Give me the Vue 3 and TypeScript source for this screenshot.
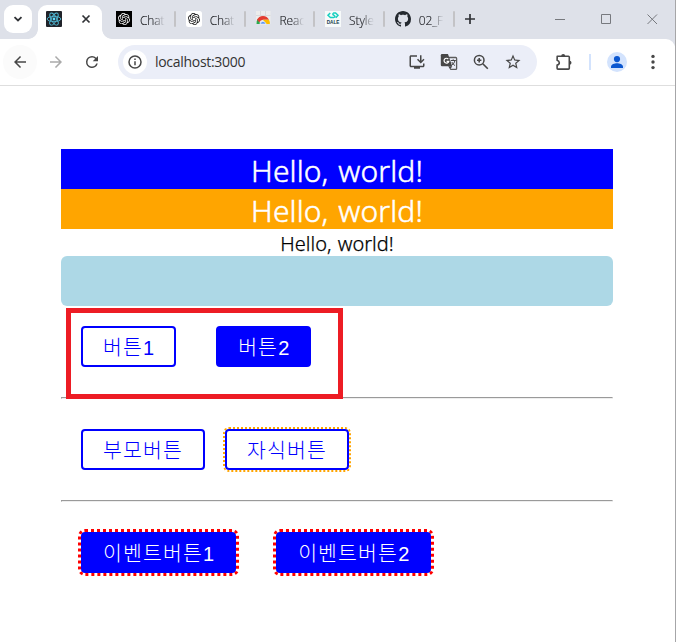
<script setup lang="ts">
interface Tab {
  icon: 'gpt-dark' | 'gpt-light' | 'chrome' | 'dale' | 'github'
  title: string
}

const tabs: Tab[] = [
  { icon: 'gpt-dark', title: 'Chat' },
  { icon: 'gpt-light', title: 'Chat' },
  { icon: 'chrome', title: 'Reac' },
  { icon: 'dale', title: 'Style' },
  { icon: 'github', title: '02_F' },
]

const knot =
  'M22.2819 9.8211a5.9847 5.9847 0 0 0-.5157-4.9108 6.0462 6.0462 0 0 0-6.5098-2.9A6.0651 6.0651 0 0 0 4.9807 4.1818a5.9847 5.9847 0 0 0-3.9977 2.9 6.0462 6.0462 0 0 0 .7427 7.0966 5.98 5.98 0 0 0 .511 4.9107 6.051 6.051 0 0 0 6.5146 2.9001A5.9847 5.9847 0 0 0 13.2599 24a6.0557 6.0557 0 0 0 5.7718-4.2058 5.9894 5.9894 0 0 0 3.9977-2.9001 6.0557 6.0557 0 0 0-.7475-7.0729zm-9.022 12.6081a4.4755 4.4755 0 0 1-2.8764-1.0408l.1419-.0804 4.7783-2.7582a.7948.7948 0 0 0 .3927-.6813v-6.7369l2.02 1.1686a.071.071 0 0 1 .038.052v5.5826a4.504 4.504 0 0 1-4.4945 4.4944zm-9.6607-4.1254a4.4708 4.4708 0 0 1-.5346-3.0137l.142.0852 4.783 2.7582a.7712.7712 0 0 0 .7806 0l5.8428-3.3685v2.3324a.0804.0804 0 0 1-.0332.0615L9.74 19.9502a4.4992 4.4992 0 0 1-6.1408-1.6464zM2.3408 7.8956a4.485 4.485 0 0 1 2.3655-1.9728V11.6a.7664.7664 0 0 0 .3879.6765l5.8144 3.3543-2.0201 1.1685a.0757.0757 0 0 1-.071 0l-4.8303-2.7865A4.504 4.504 0 0 1 2.3408 7.872zm16.5963 3.8558L13.1038 8.364 15.1192 7.2a.0757.0757 0 0 1 .071 0l4.8303 2.7913a4.4944 4.4944 0 0 1-.6765 8.1042v-5.6772a.79.79 0 0 0-.407-.667zm2.0107-3.0231l-.142-.0852-4.7735-2.7818a.7759.7759 0 0 0-.7854 0L9.409 9.2297V6.8974a.0662.0662 0 0 1 .0284-.0615l4.8303-2.7866a4.4992 4.4992 0 0 1 6.6802 4.66zM8.3065 12.863l-2.02-1.1638a.0804.0804 0 0 1-.038-.0567V6.0742a4.4992 4.4992 0 0 1 7.3757-3.4537l-.142.0805L8.704 5.459a.7948.7948 0 0 0-.3927.6813zm1.0976-2.3654l2.602-1.4998 2.6069 1.4998v2.9994l-2.5974 1.4997-2.6067-1.4997Z'
</script>

<template>
  <div class="window">
    <header class="tabstrip">
      <div class="search-tabs">
        <svg width="10" height="10" viewBox="0 0 10 10"><path d="M1.5 3.2L5 6.5l3.5-3.3" class="dark-stroke" stroke-width="1.8" /></svg>
      </div>
      <div class="active-tab">
        <svg width="16" height="16" viewBox="0 0 16 16">
          <rect width="16" height="16" rx="1" fill="#20232a" />
          <g fill="none" stroke="#4fb8d4" stroke-width="0.9">
            <ellipse cx="8" cy="8" rx="6.8" ry="2.7" />
            <ellipse cx="8" cy="8" rx="6.8" ry="2.7" transform="rotate(60 8 8)" />
            <ellipse cx="8" cy="8" rx="6.8" ry="2.7" transform="rotate(120 8 8)" />
          </g>
          <circle cx="8" cy="8" r="1.4" fill="#61dafb" />
        </svg>
        <svg width="10" height="10" viewBox="0 0 10 10"><path d="M1.5 1.5l7 7M8.5 1.5l-7 7" class="dark-stroke" stroke-width="1.7" /></svg>
      </div>
      <div v-for="(tab, i) in tabs" :key="i" class="tab">
        <svg v-if="tab.icon === 'gpt-dark'" width="16" height="16" viewBox="0 0 32 32">
          <rect width="32" height="32" fill="#000" />
          <path :d="knot" fill="#fff" transform="translate(4 4)" />
        </svg>
        <svg v-else-if="tab.icon === 'gpt-light'" width="16" height="16" viewBox="0 0 32 32">
          <rect width="32" height="32" rx="5" fill="#fff" />
          <path :d="knot" fill="#111" transform="translate(4 4)" />
        </svg>
        <svg v-else-if="tab.icon === 'chrome'" width="16" height="16" viewBox="0 0 16 16">
          <path d="M1 0h14.5v13H1z" fill="#ececec" />
          <path d="M1 4.5h14.5M5.5 0v4.5M10.5 0v4.5" stroke="#dadada" />
          <path d="M1.5 13A6.7 6.7 0 0 1 2.6 8l3 5z" fill="#2da94f" />
          <path d="M2 8.8A6.6 6.6 0 0 1 14 8.8H8a4 4 0 0 0-3.6 2.5z" fill="#e33b2e" />
          <path d="M8 8.8h6a7 7 0 0 1 .8 4.2h-4z" fill="#fdbd00" />
          <path d="M4.9 13a3.2 3.2 0 0 1 6.2 0z" fill="#4285f4" stroke="#fff" stroke-width="0.7" />
        </svg>
        <svg v-else-if="tab.icon === 'dale'" width="16" height="16" viewBox="0 0 16 16">
          <rect width="16" height="16" fill="#f7fafa" />
          <path d="M5.2 2L3 4.3l2.4 2.2h3.2q2.4-.8.4-2.1-2.2-1.2-.4-2.4h2L13 4.3 10.8 6.8" fill="none" stroke="#18cfc0" stroke-width="1.5" />
          <text x="1.7" y="13" class="dale" textLength="12.8" lengthAdjust="spacingAndGlyphs">DALE</text>
        </svg>
        <svg v-else width="16" height="16" viewBox="0 0 16 16">
          <path fill="#24292f" d="M8 0C3.58 0 0 3.58 0 8c0 3.54 2.29 6.53 5.47 7.59.4.07.55-.17.55-.38 0-.19-.01-.82-.01-1.49-2.01.37-2.53-.49-2.69-.94-.09-.23-.48-.94-.82-1.13-.28-.15-.68-.52-.01-.53.63-.01 1.08.58 1.23.82.72 1.21 1.87.87 2.33.66.07-.52.28-.87.51-1.07-1.78-.2-3.64-.89-3.64-3.95 0-.87.31-1.59.82-2.15-.08-.2-.36-1.02.08-2.12 0 0 .67-.21 2.2.82.64-.18 1.32-.27 2-.27s1.36.09 2 .27c1.53-1.04 2.2-.82 2.2-.82.44 1.1.16 1.92.08 2.12.51.56.82 1.27.82 2.15 0 3.07-1.87 3.75-3.65 3.95.29.25.54.73.54 1.48 0 1.07-.01 1.93-.01 2.2 0 .21.15.46.55.38A8.01 8.01 0 0 0 16 8c0-4.42-3.58-8-8-8z" />
        </svg>
        <span class="tab-title">{{ tab.title }}</span>
        <i class="tab-divider"></i>
      </div>
      <svg class="plus" width="12" height="12" viewBox="0 0 12 12"><path d="M6 1v10M1 6h10" class="dark-stroke" stroke-width="1.7" /></svg>
      <div class="controls">
        <svg width="11" height="11" viewBox="0 0 11 11"><path d="M0 5.5h10" /></svg>
        <svg width="11" height="11" viewBox="0 0 11 11"><path d="M.5.5h9v9h-9z" /></svg>
        <svg width="11" height="11" viewBox="0 0 11 11"><path d="M.5.5l9.5 9.5M10 .5L.5 10" /></svg>
      </div>
    </header>

    <nav class="toolbar">
      <div class="back">
        <svg width="18" height="18" viewBox="0 0 24 24"><path d="M20 11H7.83l5.59-5.59L12 4l-8 8 8 8 1.41-1.41L7.83 13H20z" fill="#474747" /></svg>
      </div>
      <svg class="forward" width="18" height="18" viewBox="0 0 24 24"><path d="M12 4l-1.41 1.41L16.17 11H4v2h12.17l-5.58 5.59L12 20l8-8z" fill="#aaa" /></svg>
      <svg class="reload" width="18" height="18" viewBox="0 0 24 24"><path d="M17.65 6.35A7.96 7.96 0 0 0 12 4a8 8 0 1 0 7.73 10h-2.08A6 6 0 1 1 12 6c1.66 0 3.14.69 4.22 1.78L13 11h7V4z" fill="#474747" /></svg>
      <div class="address">
        <div class="site-info">
          <svg width="14" height="14" viewBox="0 0 14 14">
            <circle cx="7" cy="7" r="6" fill="none" stroke="#474747" stroke-width="1.5" />
            <path d="M7 6.2v4M7 3.5v1.5" stroke="#474747" stroke-width="1.5" />
          </svg>
        </div>
        <span class="url">localhost:3000</span>
        <div class="page-actions">
          <svg width="18" height="18" viewBox="0 0 24 24"><path fill="#474747" d="M20 17H4V5h8V3H4c-1.1 0-2 .9-2 2v12c0 1.1.9 2 2 2h4v2h8v-2h4c1.1 0 2-.9 2-2v-3h-2zM17 14l5-5-1.41-1.41L18 10.17V3h-2v7.17l-2.59-2.58L12 9z" /></svg>
          <svg width="18" height="18" viewBox="0 0 18 18">
            <path d="M6.5 4.5h9.2q.9 0 .9.9v10q0 .9-.9.9h-5.5" fill="none" stroke="#5c5c5c" stroke-width="1.3" />
            <path d="M2 1h6l4.2 12.2H2q-1.2 0-1.2-1.2V2.2Q.8 1 2 1z" fill="#474747" />
            <path d="M8.2 13.2h4l-2 3.2z" fill="#474747" />
            <path d="M8.3 6.1a2.4 2.4 0 1 0 .5 2.2H6.6" fill="none" stroke="#fff" stroke-width="1.2" />
            <path d="M10.8 7.5h5M13.2 6.3v1.2M15 7.6q-.8 3-3.2 4.7M11.8 9q1.2 2.4 3.2 3.6" fill="none" stroke="#474747" stroke-width="1" />
          </svg>
          <svg width="18" height="18" viewBox="0 0 18 18">
            <circle cx="7.2" cy="7.2" r="4.8" fill="none" stroke="#474747" stroke-width="1.5" />
            <path d="M10.8 10.8l5 5M7.2 5v4.4M5 7.2h4.4" fill="none" stroke="#474747" stroke-width="1.6" />
          </svg>
          <svg width="18" height="18" viewBox="0 0 24 24"><path fill="#474747" d="M22 9.24l-7.19-.62L12 2 9.19 8.63 2 9.24l5.46 4.73L5.82 21 12 17.27 18.18 21l-1.63-7.03zM12 15.4l-3.76 2.27 1-4.28-3.32-2.88 4.38-.38L12 6.1l1.71 4.04 4.38.38-3.32 2.88 1 4.28z" /></svg>
        </div>
      </div>
      <svg class="extension" width="18" height="18" viewBox="0 0 18 18">
        <path d="M2.2 3.3h11.2q.9 0 .9.9v11q0 .9-.9.9H2.9q-.8 0-.8-.8v-3.2q2.2-.5 2.2-2.4T2.1 7.2z" fill="none" stroke="#474747" stroke-width="1.6" stroke-linejoin="round" />
        <path d="M6.2 3.1a2 2 0 0 1 4 0zM14.5 7.7a2 2 0 0 1 0 4z" fill="#474747" />
      </svg>
      <i class="toolbar-divider"></i>
      <svg class="avatar" width="20" height="20" viewBox="0 0 20 20">
        <circle cx="10" cy="10" r="10" fill="#d3e3fd" />
        <circle cx="10" cy="7.1" r="3.1" fill="#0b57d0" />
        <path d="M4 16v-1.5c0-2.1 3.7-3.3 6-3.3s6 1.2 6 3.3V16z" fill="#0b57d0" />
      </svg>
      <svg class="more" width="4" height="16" viewBox="0 0 4 16"><g fill="#474747"><circle cx="2" cy="2.4" r="1.7" /><circle cx="2" cy="8" r="1.7" /><circle cx="2" cy="13.6" r="1.7" /></g></svg>
    </nav>

    <main class="page">
      <div class="hello large blue"><span>Hello, world!</span></div>
      <div class="hello large orange"><span>Hello, world!</span></div>
      <div class="hello small"><span>Hello, world!</span></div>
      <div class="box"></div>
      <section class="row first">
        <button class="btn"><span class="ko">버튼</span>1</button>
        <button class="btn filled"><span class="ko">버튼</span>2</button>
        <div class="marker"></div>
      </section>
      <hr />
      <section class="row second">
        <button class="btn"><span class="ko">부모버튼</span></button>
        <button class="btn child"><span class="ko">자식버튼</span></button>
      </section>
      <hr />
      <section class="row third">
        <button class="btn filled event"><span class="ko">이벤트버튼</span>1</button>
        <button class="btn filled event"><span class="ko">이벤트버튼</span>2</button>
      </section>
    </main>
  </div>
</template>

<style>
body {
  margin: 0;
  background: #fff;
  overflow: hidden;
}
</style>

<style scoped>
* {
  box-sizing: border-box;
}
svg {
  display: block;
  flex: none;
}
.window {
  width: 676px;
  height: 642px;
  border-right: 1px solid #a6a6a8;
  background: #fff;
  font-family: 'Open Sans', 'Noto Sans', sans-serif;
}
.dark-stroke {
  fill: none;
  stroke: #303236;
}
.tabstrip {
  display: flex;
  height: 46px;
  padding: 5px 0 0 4px;
  margin-bottom: -7px;
  background: #dee1e9;
}
.search-tabs {
  display: flex;
  align-items: center;
  justify-content: center;
  width: 28px;
  height: 28px;
  border-radius: 9px;
  background: #fff;
}
.active-tab {
  position: relative;
  display: flex;
  align-items: center;
  justify-content: space-between;
  width: 64px;
  height: 34px;
  margin: 0 6px;
  padding: 0 11px 6px 8px;
  border-radius: 9px 9px 0 0;
  background: #fff;
}
.active-tab::before,
.active-tab::after {
  content: '';
  position: absolute;
  bottom: 0;
  width: 10px;
  height: 10px;
}
.active-tab::before {
  left: -10px;
  background: radial-gradient(circle at 0 0, transparent 9.5px, #fff 10.2px);
}
.active-tab::after {
  right: -10px;
  background: radial-gradient(circle at 100% 0, transparent 9.5px, #fff 10.2px);
}
.tab {
  display: flex;
  align-items: center;
  width: 69.7px;
  height: 28px;
  padding-left: 8px;
}
.tab-title {
  width: 25px;
  margin: 3px 9px 0 8px;
  white-space: nowrap;
  font-size: 12px;
  font-weight: 300;
  letter-spacing: -0.1px;
  line-height: 18px;
  color: #202226;
  -webkit-text-stroke: 0.15px currentColor;
  -webkit-mask-image: linear-gradient(90deg, #000 50%, transparent 100%);
  mask-image: linear-gradient(90deg, #000 50%, transparent 100%);
}
.tab-divider {
  flex: none;
  width: 2px;
  height: 16px;
  border-radius: 1px;
  background: #c3c3c6;
}
.dale {
  font: 900 5px 'Liberation Sans', sans-serif;
  fill: #173c4c;
}
.plus {
  margin: 8px 0 0 8px;
}
.controls {
  display: flex;
  gap: 35px;
  margin: 9px 17px 0 auto;
}
.controls path {
  fill: none;
  stroke: #77797e;
  stroke-width: 1;
}
.toolbar {
  position: relative;
  display: flex;
  align-items: center;
  height: 47px;
  padding: 0 19px 0 3px;
  border-bottom: 1px solid #dedede;
  border-radius: 0 9px 0 0;
  background: #fff;
}
.back {
  display: flex;
  align-items: center;
  justify-content: center;
  width: 34px;
  height: 34px;
  border-radius: 50%;
  background: #fbfbfb;
}
.forward {
  margin-left: 10px;
}
.reload {
  margin-left: 18px;
}
.address {
  display: flex;
  align-items: center;
  width: 419px;
  height: 34px;
  margin-left: 17px;
  padding: 0 15px 0 5px;
  border-radius: 17px;
  background: #ebeef8;
}
.site-info {
  display: flex;
  align-items: center;
  justify-content: center;
  width: 24px;
  height: 24px;
  border-radius: 50%;
  background: #fff;
}
.url {
  margin-top: -1px;
  margin-left: 8px;
  font-size: 14px;
  letter-spacing: -0.3px;
  color: #333;
}
.page-actions {
  display: flex;
  gap: 14px;
  margin-left: auto;
}
.extension {
  margin-left: 18px;
}
.toolbar-divider {
  width: 2px;
  height: 16px;
  margin-left: 16px;
  background: #d3e3fd;
}
.avatar {
  margin-left: 16px;
}
.more {
  margin-left: auto;
  margin-right: 1px;
}
.page {
  padding: 63px 62px 0 61px;
}
.hello {
  font-family: 'Noto Sans', sans-serif;
  font-weight: 300;
  text-align: center;
  white-space: nowrap;
}
.large {
  height: 40px;
  padding-top: 2px;
  font-size: 30px;
  line-height: 40px;
  letter-spacing: 0.1px;
  word-spacing: 2px;
  color: #fff;
  -webkit-text-stroke: 0.5px currentColor;
}
.blue {
  background: #00f;
}
.orange {
  background: orange;
}
.small {
  height: 27px;
  font-size: 20px;
  line-height: 29px;
  word-spacing: 1px;
  color: #000;
  -webkit-text-stroke: 0.25px currentColor;
}
.box {
  height: 50px;
  border-radius: 6px;
  background: #add8e6;
}
.row {
  position: relative;
  display: flex;
  padding: 20px;
  gap: 40px;
}
.first {
  height: 91px;
}
.second {
  height: 101px;
  padding-top: 30px;
  gap: 20px;
}
.third {
  padding-top: 30px;
}
.btn {
  height: 41px;
  margin: 0;
  padding: 0 20px;
  border: 2px solid #00f;
  border-radius: 4px;
  background: #fff;
  color: #00f;
  font: 20px/37px 'Liberation Sans', 'Noto Sans CJK KR', sans-serif;
  white-space: nowrap;
}
.ko {
  font-family: 'Noto Sans CJK KR', sans-serif;
  font-size: 20.5px;
  font-weight: 300;
  letter-spacing: 1.14px;
}
.filled {
  background: #00f;
  color: #fff;
}
.child {
  outline: 2px dotted orange;
}
.event {
  outline: 3px dotted red;
}
hr {
  height: 2px;
  margin: 0;
  border: 1px solid;
  border-color: #9a9a9a #eee #eee #9a9a9a;
}
.marker {
  position: absolute;
  top: 2px;
  left: 5px;
  width: 277px;
  height: 91px;
  border: 5px solid #ed1c24;
}
</style>
